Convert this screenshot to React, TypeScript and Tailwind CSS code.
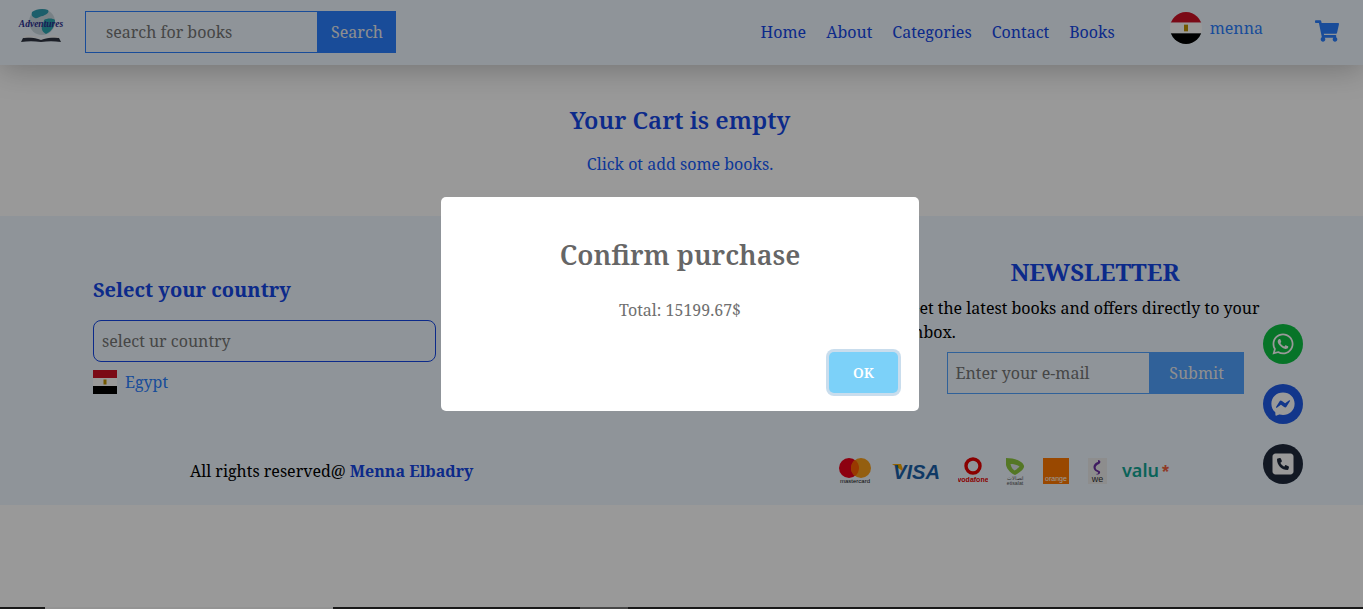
import { FaShoppingCart, FaWhatsapp, FaFacebookMessenger } from "react-icons/fa"
import { FaSquarePhone } from "react-icons/fa6"

const links = ["Home", "About", "Categories", "Contact", "Books"]

function EgyptFlag({ className }: { className: string }) {
  return (
    <svg viewBox="0 0 24 24" className={className}>
      <rect width="24" height="8" fill="#ce1126" />
      <rect y="8" width="24" height="8" fill="#fff" />
      <rect y="16" width="24" height="8" fill="#000" />
      <rect x="10.5" y="9.5" width="3" height="5" fill="#c09300" />
    </svg>
  )
}

function BrandLogo() {
  return (
    <svg viewBox="0 0 48 34" className="h-[34px] w-[48px]">
      <circle cx="25" cy="14" r="13" fill="#c9d8e0" />
      <path d="M15 4c4-3 11-4 16-2c2 3-3 5-5 6c-3 0-5 3-8 2c-3-1-4-3-3-6z" fill="#2f9db2" />
      <path d="M27 12c3-2 9-2 11 0c0 6-3 11-9 14c-3-2-5-4-4-8c1-2 2-4 2-6z" fill="#2aa5b0" />
      <path d="M4 34l2-4c7-1 13 0 18 2c5-2 12-3 18-2l2 4c-7-1-13-1-20 0c-7-1-13-1-20 0z" fill="#2f3542" />
      <path d="M7 28c6-1 12 0 17 2c5-2 11-3 17-2l1 2c-7-1-12-1-18 1c-6-2-11-2-18-1z" fill="#f7f7f7" />
      <text x="24" y="18.500" textAnchor="middle" fontSize="9.500" fontStyle="italic" fontWeight="700" fill="#2b2f8f" fontFamily="Liberation Serif">Adventures</text>
    </svg>
  )
}

function PaymentLogos() {
  return (
    <div className="flex items-center">
      <svg viewBox="0 0 32 26" className="h-[26px] w-[32px]">
        <circle cx="10" cy="10" r="10" fill="#eb001b" />
        <circle cx="22" cy="10" r="10" fill="#f79e1b" />
        <path d="M16 2a10 10 0 0 1 0 16a10 10 0 0 1 0-16z" fill="#ff5f00" />
        <text x="16" y="25" textAnchor="middle" fontSize="6" fill="#111" fontFamily="Liberation Sans">mastercard</text>
      </svg>
      <svg viewBox="0 0 50 20" className="ml-[21px] h-[20px] w-[50px] overflow-visible">
        <path d="M0 3h9l3 8z" fill="#f7a600" />
        <text x="1" y="18" fontSize="20" fontWeight="700" fontStyle="italic" fill="#1a5fa8" fontFamily="Liberation Sans" textLength="47" lengthAdjust="spacingAndGlyphs">VISA</text>
      </svg>
      <svg viewBox="0 0 30 28" className="ml-[16px] h-[28px] w-[30px]">
        <circle cx="15" cy="9" r="7" fill="none" stroke="#e60000" strokeWidth="3.4" />
        <text x="15" y="25" textAnchor="middle" fontSize="7" fontWeight="700" fill="#e60000" fontFamily="Liberation Sans">vodafone</text>
      </svg>
      <svg viewBox="0 0 22 28" className="ml-[16px] h-[28px] w-[22px]">
        <path d="M2 1c8 0 17 3 18 8c.5 3-5 7-9 9c-3-1-8-5-9-10z" fill="#8cc63f" />
        <path d="M6.500 7c4 0 7 1 9 2.500c-1 1-3 3-5 4c-1.500-1-3.500-3-4-6.500z" fill="#dfe7ec" />
        <text x="11" y="23" textAnchor="middle" fontSize="5" fill="#555" fontFamily="Noto Sans">اتصالات</text>
        <text x="11" y="27.500" textAnchor="middle" fontSize="5.200" fill="#555" fontFamily="Liberation Sans">etisalat</text>
      </svg>
      <div className="ml-[17px] flex h-[26px] w-[26px] items-end justify-center bg-[#ff7900] pb-px">
        <span className="font-['Liberation_Sans'] text-[7px] leading-[8px] text-white">orange</span>
      </div>
      <svg viewBox="0 0 19 26" className="ml-[19px] h-[26px] w-[19px]">
        <rect width="19" height="26" fill="#ececec" />
        <path d="M10 2c3 0 3 3 1 4c-3 1-4 3-3 5c1 2 5 1 4 4c-.5 1.500-3 2-4 1c2 0 3-1 1.500-2c-3-1-5-4-3.500-7c1-2 3-3 4-3z" fill="#6a2fa0" />
        <text x="9.500" y="24" textAnchor="middle" fontSize="9" fill="#333" fontFamily="Liberation Sans">we</text>
      </svg>
      <svg viewBox="0 0 48 16" className="ml-[15px] h-[16px] w-[48px] overflow-visible">
        <text x="0" y="14" fontSize="17" fontWeight="600" fill="#12a594" fontFamily="Noto Sans" textLength="37" lengthAdjust="spacingAndGlyphs">valu</text>
        <text x="40" y="15" fontSize="18" fontWeight="700" fill="#f0623e" fontFamily="Liberation Sans">*</text>
      </svg>
    </div>
  )
}

export default function App() {
  return (
    <div className="relative h-[609px] overflow-hidden bg-white font-['Noto_Serif','DejaVu_Serif',serif] text-base">
      {/* navbar */}
      <nav className="relative z-10 flex h-[65px] items-center bg-[#eef7ff] pb-[2px] pl-[17px] pr-[24px] shadow-[0_4px_30px_rgba(0,0,0,0.25)]">
        <div className="-mt-[14px]">
          <BrandLogo />
        </div>
        <form className="ml-[20px] flex h-[42px]">
          <div className="flex h-full w-[233px] items-center border border-[#2b7fff] pl-[20px] text-[#757575]">search for books</div>
          <button type="button" className="h-full w-[78px] bg-[#2b7fff] text-[#eee]">Search</button>
        </form>
        <ul className="ml-auto flex gap-5 text-[#1447e6]">
          {links.map((l) => (
            <li key={l}>{l}</li>
          ))}
        </ul>
        <div className="-mt-[7px] ml-[55px] flex items-center">
          <EgyptFlag className="h-[32px] w-[32px] rounded-full" />
          <span className="-mt-[1px] ml-[8px] text-[#2b7fff]">menna</span>
        </div>
        <FaShoppingCart className="-mt-[1px] ml-[52px] h-[24px] w-[24px] text-[#2b7fff]" />
      </nav>

      {/* empty cart */}
      <section className="flex h-[151px] flex-col items-center pr-[3px] pt-[39px]">
        <h2 className="text-2xl font-semibold text-[#1447e6]">Your Cart is empty</h2>
        <p className="mt-[16px] text-[#155dfc]">Click ot add some books.</p>
      </section>

      {/* footer */}
      <footer className="h-[289px] bg-[#eef7ff] pl-[93px] pr-[81px]">
        <div className="flex justify-between">
          <div className="w-[343px] pt-[60px]">
            <h3 className="text-xl font-bold text-[#1447e6]">Select your country</h3>
            <div className="mt-[16px] flex h-[42px] items-center rounded-lg border border-[#1447e6] pl-2 text-[#757575]">select ur country</div>
            <div className="mt-2 flex items-center">
              <EgyptFlag className="h-[24px] w-[24px]" />
              <span className="ml-2 text-[#2b7fff]">Egypt</span>
            </div>
          </div>
          <div className="w-[374px] pt-[40px]">
            <h3 className="text-center text-2xl font-bold text-[#1447e6]">NEWSLETTER</h3>
            <p className="mt-[8px] leading-[24px] text-black">Get the latest books and offers directly to your inbox.</p>
            <div className="mt-[8px] flex h-[42px] justify-center">
              <div className="flex w-[203px] items-center border border-[#51a2ff] pl-2 text-[#757575]">Enter your e-mail</div>
              <button type="button" className="w-[94px] bg-[#51a2ff] text-[#eee]">Submit</button>
            </div>
          </div>
        </div>
        <div className="mt-[63px] flex items-center">
          <p className="ml-[97px] text-black">
            All rights reserved@ <span className="font-bold text-[#1447e6]">Menna Elbadry</span>
          </p>
          <div className="ml-auto mr-[112px]">
            <PaymentLogos />
          </div>
        </div>
      </footer>

      <div className="h-[102px]" />
      <div className="flex h-[2px] bg-[#2b2b2b]">
        <div className="ml-[45px] w-[288px] bg-[#f5f5f5]" />
        <div className="ml-[247px] w-[48px] bg-[#777]" />
      </div>

      {/* floating contact buttons */}
      <div className="absolute right-[60px] top-[324px] flex flex-col gap-5">
        <span className="flex h-10 w-10 items-center justify-center rounded-full bg-[#0cc143] text-white"><FaWhatsapp className="h-[24px] w-[24px]" /></span>
        <span className="flex h-10 w-10 items-center justify-center rounded-full bg-[#1e5ae8] text-white"><FaFacebookMessenger className="h-[24px] w-[24px]" /></span>
        <span className="flex h-10 w-10 items-center justify-center rounded-full bg-[#1e293b] text-white"><FaSquarePhone className="h-[24px] w-[24px]" /></span>
      </div>

      {/* modal */}
      <div className="absolute inset-0 z-20 flex items-center justify-center bg-black/40 pb-[1px] pr-[3px]">
        <div className="flex h-[214px] w-[478px] flex-col items-center rounded-[5px] bg-white">
          <h2 className="mt-[38px] text-[27px] font-semibold leading-[40px] text-[#666]">Confirm purchase</h2>
          <p className="mt-[23px] leading-[24px] text-[#707070]">Total: 15199.67$</p>
          <button type="button" className="mt-[30px] mr-[21px] h-[41px] w-[69px] self-end rounded-[5px] bg-[#7cd1f9] text-sm font-semibold text-white shadow-[0_0_0_3px_rgba(120,170,210,0.4)]">OK</button>
        </div>
      </div>
    </div>
  )
}
